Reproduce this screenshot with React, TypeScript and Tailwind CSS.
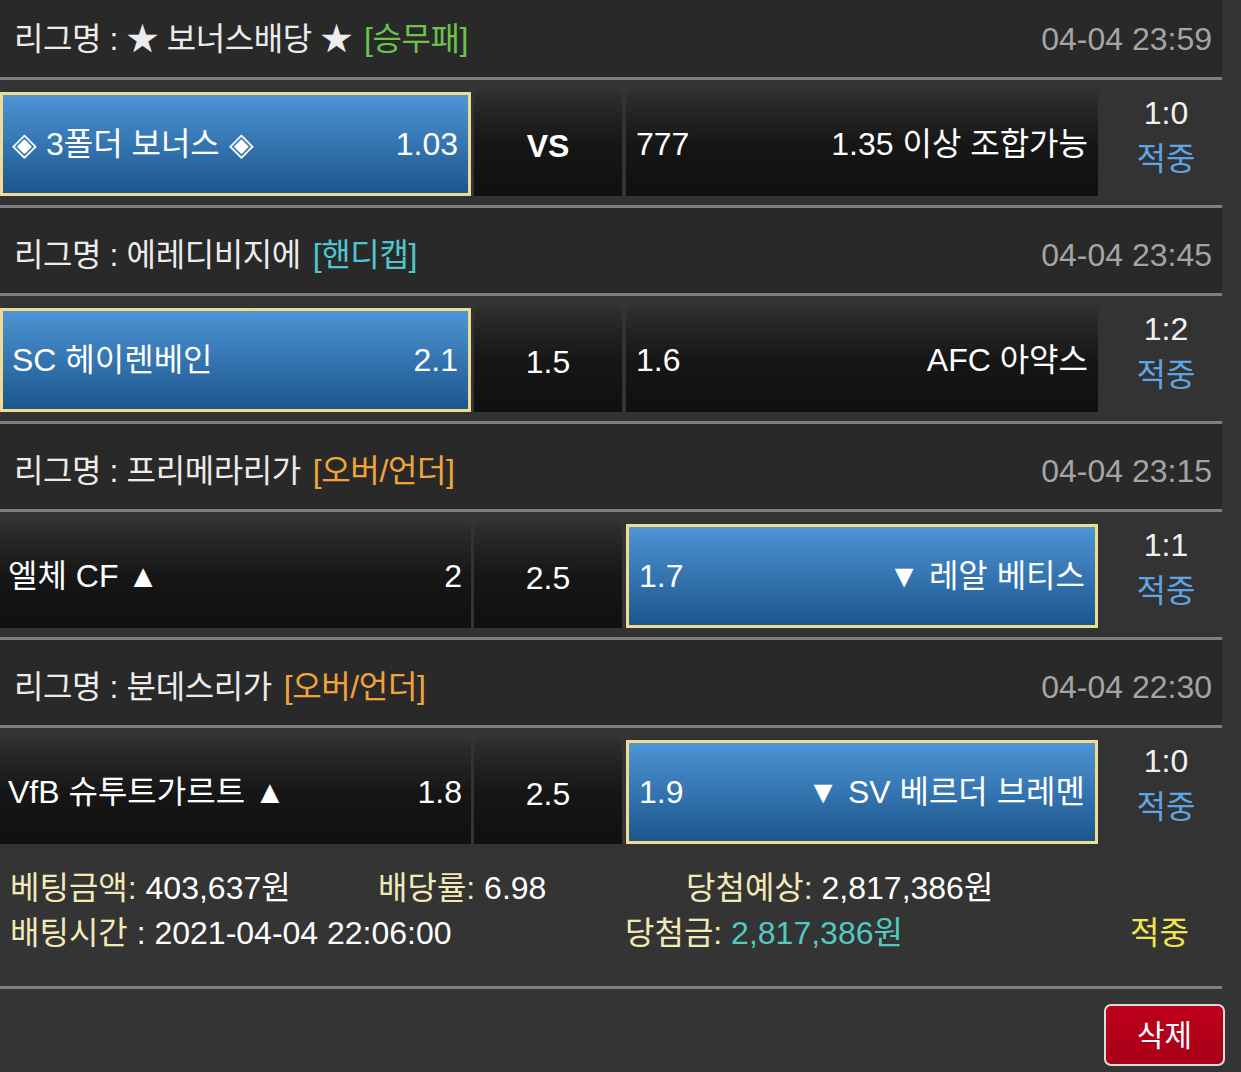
import React from 'react';

type Side = {
  name: string;
  odds: string;
};

interface Game {
  league: string;
  tag: string;
  tagColor: string;
  time: string;
  home: Side;
  mid: string;
  away: Side;
  pick: 'home' | 'away';
  score: string;
  first?: boolean;
}

const games: Game[] = [
  {
    league: '★ 보너스배당 ★',
    tag: '[승무패]',
    tagColor: 'text-[#6cc24a]',
    time: '04-04 23:59',
    home: { name: '◈ 3폴더 보너스 ◈', odds: '1.03' },
    mid: 'VS',
    away: { name: '1.35 이상 조합가능', odds: '777' },
    pick: 'home',
    score: '1:0',
    first: true,
  },
  {
    league: '에레디비지에',
    tag: '[핸디캡]',
    tagColor: 'text-[#4fc6cf]',
    time: '04-04 23:45',
    home: { name: 'SC 헤이렌베인', odds: '2.1' },
    mid: '1.5',
    away: { name: 'AFC 아약스', odds: '1.6' },
    pick: 'home',
    score: '1:2',
  },
  {
    league: '프리메라리가',
    tag: '[오버/언더]',
    tagColor: 'text-[#f2a33a]',
    time: '04-04 23:15',
    home: { name: '엘체 CF ▲', odds: '2' },
    mid: '2.5',
    away: { name: '▼ 레알 베티스', odds: '1.7' },
    pick: 'away',
    score: '1:1',
  },
  {
    league: '분데스리가',
    tag: '[오버/언더]',
    tagColor: 'text-[#f2a33a]',
    time: '04-04 22:30',
    home: { name: 'VfB 슈투트가르트 ▲', odds: '1.8' },
    mid: '2.5',
    away: { name: '▼ SV 베르더 브레멘', odds: '1.9' },
    pick: 'away',
    score: '1:0',
  },
];

const blueCell =
  'border-[3px] border-[#efdb92] bg-linear-to-b from-[#4d95d5] to-[#1c568e]';
const darkCell = 'bg-linear-to-b from-[#2f2f2f] via-[#161616] to-[#101010]';

const LeagueHeader: React.FC<{ game: Game }> = ({ game }) => (
  <div
    className={`flex items-center justify-between bg-[#292929] pl-[14px] pr-[10px] border-b-[3px] border-[#7e7e7e] ${
      game.first ? 'h-[80px]' : 'h-[88px] pt-[8px]'
    }`}
  >
    <div className="tracking-[-0.4px] text-[#ececec]">
      리그명 : {game.league}
      <span className={`ml-[12px] ${game.tagColor}`}>{game.tag}</span>
    </div>
    <div className="text-[#a4a4a4]">{game.time}</div>
  </div>
);

const MatchRow: React.FC<{ game: Game; last?: boolean }> = ({ game, last }) => {
  const homeBlue = game.pick === 'home';
  return (
    <div
      className={`flex bg-[#333333] pt-[12px] ${last ? 'pb-[9px]' : 'pb-[9px] border-b-[3px] border-[#7e7e7e]'}`}
    >
      {/* home */}
      <div
        className={`flex h-[104px] w-[471px] items-center justify-between ${
          homeBlue ? `${blueCell} pl-[9px] pr-[10px]` : `${darkCell} pl-[8px] pr-[9px]`
        }`}
      >
        <span>{game.home.name}</span>
        <span>{game.home.odds}</span>
      </div>
      {/* handicap / vs */}
      <div
        className={`ml-[3px] flex h-[104px] w-[148px] items-center justify-center pt-[4px] ${darkCell} ${
          game.mid === 'VS' ? 'font-bold' : ''
        }`}
      >
        {game.mid}
      </div>
      {/* away */}
      <div
        className={`ml-[4px] flex h-[104px] w-[472px] items-center justify-between ${
          !homeBlue ? `${blueCell} pl-[10px] pr-[10px]` : `${darkCell} pl-[10px] pr-[10px]`
        }`}
      >
        <span>{game.away.odds}</span>
        <span>{game.away.name}</span>
      </div>
      {/* result */}
      <div className="-mt-[2px] flex w-[124px] flex-col items-center pl-[12px] leading-[46px]">
        <span className="text-[#f2f2f2]">{game.score}</span>
        <span className="text-[#5ea5e2]">적중</span>
      </div>
    </div>
  );
};

export default function App() {
  return (
    <div className="min-h-screen w-full bg-[#343434] font-['Liberation_Sans','Noto_Sans_CJK_KR',sans-serif] text-[32px] text-white">
      <div className="w-[1222px]">
        {games.map((g, i) => (
          <React.Fragment key={i}>
            <LeagueHeader game={g} />
            <MatchRow game={g} last={i === games.length - 1} />
          </React.Fragment>
        ))}

        {/* bet summary */}
        <div className="border-b-[3px] border-[#7e7e7e] pb-[30px] pl-[10px] pt-[13px] leading-[45px]">
          <div className="flex">
            <span className="w-[368px]">
              <span className="text-[#f1e9b6]">베팅금액:</span> 403,637원
            </span>
            <span className="w-[308px]">
              <span className="text-[#f1e9b6]">배당률:</span> 6.98
            </span>
            <span>
              <span className="text-[#f1e9b6]">당첨예상:</span> 2,817,386원
            </span>
          </div>
          <div className="flex">
            <span className="w-[615px]">
              <span className="text-[#f1e9b6]">배팅시간</span> : 2021-04-04 22:06:00
            </span>
            <span className="w-[505px]">
              <span className="text-[#f1e9b6]">당첨금:</span>{' '}
              <span className="text-[#52c9c1]">2,817,386원</span>
            </span>
            <span className="text-[#f3e54a]">적중</span>
          </div>
        </div>
      </div>

      <div className="flex justify-end pr-[16px] pt-[15px]">
        <button className="flex h-[62px] w-[121px] items-center justify-center rounded-[7px] border-2 border-[#dcdcdc] bg-linear-to-b from-[#c0001c] to-[#a80018] text-[30px] text-white">
          삭제
        </button>
      </div>
    </div>
  );
}
